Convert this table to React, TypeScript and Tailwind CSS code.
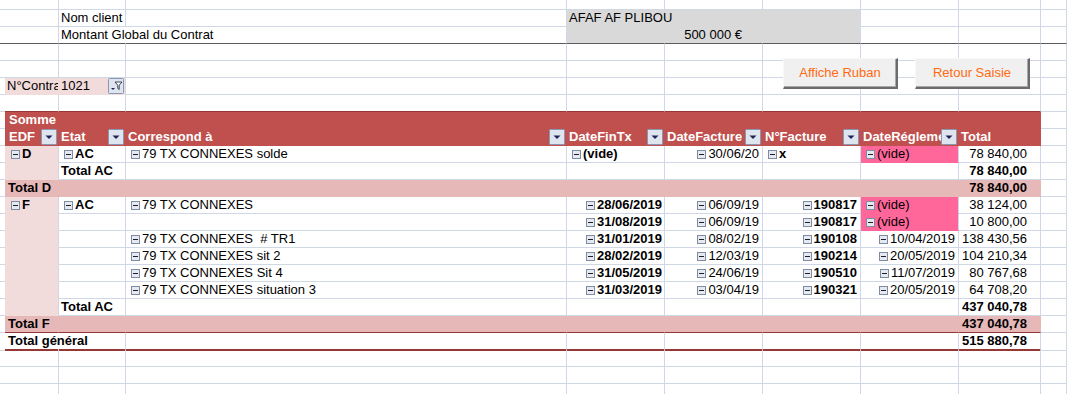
import type { ReactNode } from 'react'
import { twMerge } from 'tailwind-merge'

type Cell = [ReactNode?, string?]

const cols = 'grid grid-cols-[5px_54px_67px_441px_98px_98px_98px_98px_82px_1fr]'
const base =
  'flex items-center min-w-0 overflow-hidden whitespace-nowrap border-r border-b border-r-[#d0d7e5] border-b-[#d0d7e5] px-[2px] leading-[16px]'

const red = 'bg-[#c0504d] border-r-[#c0504d] border-b-[#c0504d] text-white font-bold'
const labelPink = 'bg-[#f2dcdb] border-b-[#f2dcdb]'
const totalPink = 'bg-[#e6b8b7] border-r-[#e6b8b7] border-b-[#e6b8b7] font-bold'
const hotPink = 'bg-[#ff6699] border-b-[#ff6699]'
const gray = 'bg-[#d9d9d9] border-r-[#d9d9d9] border-b-[#d9d9d9]'

function Box() {
  return (
    <svg width="9" height="9" viewBox="0 0 9 9" className="shrink-0 mr-[2px]">
      <rect x="0.5" y="0.5" width="8" height="8" fill="#e6eaf0" stroke="#7d8ba3" />
      <rect x="2" y="4" width="5" height="1" fill="#1b1f2e" />
    </svg>
  )
}

function Drop() {
  return (
    <svg width="16" height="16" viewBox="0 0 16 16" className="shrink-0">
      <rect x="0.5" y="0.5" width="15" height="15" rx="1" fill="#dfe5ee" stroke="#8797b4" />
      <path d="M4.5 6.5h7L8 10z" fill="#1e2456" />
    </svg>
  )
}

function Filter() {
  return (
    <svg width="16" height="16" viewBox="0 0 16 16" className="shrink-0">
      <rect x="0.5" y="0.5" width="15" height="15" rx="1" fill="#dfe5ee" stroke="#8797b4" />
      <path d="M7 4h7l-2.8 3.2v4.3l-1.4-1V7.2z" fill="#fff" stroke="#2a2f45" strokeWidth="0.9" />
      <path d="M3 10h4l-2 2z" fill="#1e2456" />
    </svg>
  )
}

function Item({ children, bold }: { children: ReactNode; bold?: boolean }) {
  return (
    <>
      <Box />
      <span className={bold ? 'font-bold whitespace-pre' : 'whitespace-pre'}>{children}</span>
    </>
  )
}

function Head({ label }: { label: string }) {
  return (
    <>
      <span className="min-w-0 overflow-hidden">{label}</span>
      <Drop />
    </>
  )
}

function Row({
  cells = {},
  h = 'h-[17px]',
  pivot = '',
  every = '',
}: {
  cells?: Record<number, Cell>
  h?: string
  pivot?: string
  every?: string
}) {
  return (
    <div className={`${cols} ${h}`}>
      {Array.from({ length: 10 }, (_, i) => {
        const [content, cls] = cells[i] ?? []
        return (
          <div
            key={i}
            className={twMerge(base, i === 0 && 'border-r-0', every, i > 0 && i < 9 && pivot, cls)}
          >
            {content}
          </div>
        )
      })}
    </div>
  )
}

type Line = { d?: string; e: string; f: string; g: string; h?: string; t: string }

const lines: Line[] = [
  { d: '79 TX CONNEXES', e: '28/06/2019', f: '06/09/19', g: '190817', t: '38 124,00' },
  { e: '31/08/2019', f: '06/09/19', g: '190817', t: '10 800,00' },
  { d: '79 TX CONNEXES  # TR1', e: '31/01/2019', f: '08/02/19', g: '190108', h: '10/04/2019', t: '138 430,56' },
  { d: '79 TX CONNEXES sit 2', e: '28/02/2019', f: '12/03/19', g: '190214', h: '20/05/2019', t: '104 210,34' },
  { d: '79 TX CONNEXES Sit 4', e: '31/05/2019', f: '24/06/19', g: '190510', h: '11/07/2019', t: '80 767,68' },
  { d: '79 TX CONNEXES situation 3', e: '31/03/2019', f: '03/04/19', g: '190321', h: '20/05/2019', t: '64 708,20' },
]

const btn =
  'absolute top-[58px] w-[115px] h-[31px] bg-[#f0f0f0] text-[#ff6a10] text-[13px] border-t border-l border-t-[#f8f8f8] border-l-[#f8f8f8] border-r-2 border-b-2 border-r-[#6b6b6b] border-b-[#6b6b6b] shadow-[inset_-1px_-1px_0_#a8a8a8]'

export default function App() {
  return (
    <div className="relative w-[1067px] h-[394px] overflow-hidden bg-white text-[13px] text-black font-['Liberation_Sans',Arial,sans-serif]">
      <Row h="h-[10px]" />
      <Row
        cells={{
          2: ['Nom client'],
          4: [<span className="relative z-10">AFAF AF PLIBOU</span>, `${gray} overflow-visible`],
          5: [null, gray],
          6: [null, 'bg-[#d9d9d9] border-b-[#d9d9d9]'],
        }}
      />
      <Row
        every="border-b-[#5c5c5c]"
        cells={{
          2: ['Montant Global du Contrat', 'overflow-visible border-r-transparent'],
          4: [null, 'bg-[#d9d9d9] border-r-[#d9d9d9]'],
          5: ['500 000 €', 'bg-[#d9d9d9] border-r-[#d9d9d9] justify-end pr-[20px]'],
          6: [null, 'bg-[#d9d9d9]'],
        }}
      />
      <Row />
      <Row />
      <Row
        cells={{
          1: ['N°Contrat', `${labelPink} border-r-[#f2dcdb]`],
          2: [
            <>
              <span>1021</span>
              <Filter />
            </>,
            `${labelPink} justify-between pr-[1px]`,
          ],
        }}
      />
      <Row pivot="border-b-[#953735]" />
      <Row pivot={red} cells={{ 1: ['Somme', 'overflow-visible pl-[4px]'] }} />
      <Row
        pivot={`${red} justify-between pr-[1px]`}
        cells={{
          1: [<Head label="EDF" />, 'pl-[4px]'],
          2: [<Head label="Etat" />],
          3: [<Head label="Correspond à" />],
          4: [<Head label="DateFinTx" />],
          5: [<Head label="DateFacture" />],
          6: [<Head label="N°Facture" />],
          7: [<Head label="DateRéglement" />],
          8: ['Total'],
        }}
      />
      <Row
        cells={{
          1: [<Item bold>D</Item>, `${labelPink} pl-[6px]`],
          2: [<Item bold>AC</Item>, 'pl-[5px]'],
          3: [<Item>79 TX CONNEXES solde</Item>, 'pl-[5px]'],
          4: [<Item bold>(vide)</Item>, 'pl-[5px]'],
          5: [<Item>30/06/20</Item>, 'justify-end pr-[3px]'],
          6: [<Item bold>x</Item>, 'pl-[5px]'],
          7: [<Item>(vide)</Item>, `${hotPink} pl-[5px]`],
          8: ['78 840,00', 'justify-end pr-[13px]'],
        }}
      />
      <Row
        cells={{
          1: [null, labelPink],
          2: ['Total AC', 'font-bold'],
          8: ['78 840,00', 'justify-end pr-[13px] font-bold'],
        }}
      />
      <Row
        pivot={totalPink}
        cells={{
          1: ['Total D', 'overflow-visible pl-[3px]'],
          8: ['78 840,00', 'justify-end pr-[13px]'],
        }}
      />
      {lines.map((l, i) => (
        <Row
          key={i}
          cells={{
            1: [i === 0 ? <Item bold>F</Item> : null, `${labelPink} pl-[6px]`],
            2: [i === 0 ? <Item bold>AC</Item> : null, 'pl-[5px]'],
            3: [l.d ? <Item>{l.d}</Item> : null, 'pl-[5px]'],
            4: [<Item bold>{l.e}</Item>, 'justify-end'],
            5: [<Item>{l.f}</Item>, 'justify-end pr-[3px]'],
            6: [<Item bold>{l.g}</Item>, 'justify-end pr-[3px]'],
            7: l.h ? [<Item>{l.h}</Item>, 'justify-end pr-[3px]'] : [<Item>(vide)</Item>, `${hotPink} pl-[5px]`],
            8: [l.t, 'justify-end pr-[13px]'],
          }}
        />
      ))}
      <Row
        cells={{
          1: [null, labelPink],
          2: ['Total AC', 'font-bold'],
          8: ['437 040,78', 'justify-end pr-[13px] font-bold'],
        }}
      />
      <Row
        pivot={`${totalPink} border-b-[#953735]`}
        cells={{
          1: ['Total F', 'overflow-visible pl-[3px]'],
          8: ['437 040,78', 'justify-end pr-[13px]'],
        }}
      />
      <Row
        pivot="border-b-2 border-b-[#953735] font-bold"
        cells={{
          1: ['Total général', 'overflow-visible border-r-transparent pl-[3px]'],
          8: ['515 880,78', 'justify-end pr-[13px]'],
        }}
      />
      <Row />
      <Row />
      <Row />

      <button className={`${btn} left-[783px]`}>Affiche Ruban</button>
      <button className={`${btn} left-[915px]`}>Retour Saisie</button>
    </div>
  )
}
